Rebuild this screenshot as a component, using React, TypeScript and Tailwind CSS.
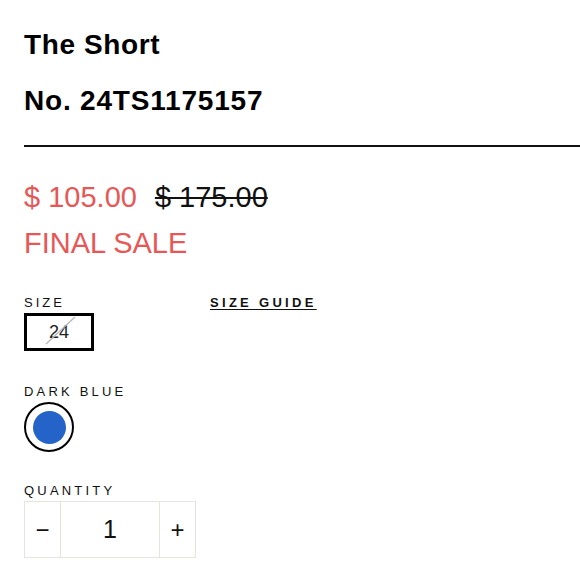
export default function App() {
  return (
    <div className="h-[580px] w-[580px] overflow-hidden bg-white pl-6 font-['Liberation_Sans',Arial,sans-serif] text-black">
      <h1 className="pt-[29px] text-[28px] font-bold leading-[32px] tracking-[0.6px]">The Short</h1>
      <h2 className="mt-[24px] text-[28px] font-bold leading-[32px] tracking-[0.8px]">No. 24TS1175157</h2>
      <div className="mt-[28px] h-[2px] bg-[#111]" />

      <div className="mt-[34px] flex items-baseline gap-[18px] text-[29px] leading-[32px]">
        <span className="text-[#e95656]">$ 105.00</span>
        <span className="text-[#111] line-through decoration-2">$ 175.00</span>
      </div>
      <div className="mt-[14px] text-[29px] leading-[32px] text-[#e95656]">FINAL SALE</div>

      <div className="mt-[37px] flex items-start">
        <div className="w-[186px]">
          <div className="text-[13px] leading-[14px] tracking-[3px] text-[#111]">SIZE</div>
          <div className="relative mt-[3px] flex h-[38px] w-[70px] items-center justify-center border-[3px] border-black text-[18px] text-[#222]">
            24
            <svg className="absolute inset-0 h-full w-full" viewBox="0 0 64 32" preserveAspectRatio="none">
              <line x1="19" y1="28" x2="48" y2="1" stroke="#b5b5b5" strokeWidth="1.2" />
            </svg>
          </div>
        </div>
        <a className="text-[13px] font-bold leading-[14px] tracking-[3.3px] underline underline-offset-2 text-[#111]">
          SIZE GUIDE
        </a>
      </div>

      <div className="mt-[34px] text-[13px] leading-[14px] tracking-[3.2px] text-[#111]">DARK BLUE</div>
      <div className="mt-[3px] flex h-[50px] w-[50px] items-center justify-center rounded-full border-2 border-black">
        <div className="h-[33px] w-[33px] rounded-full bg-[#2463c8]" />
      </div>

      <div className="mt-[32px] text-[13px] leading-[14px] tracking-[3.2px] text-[#111]">QUANTITY</div>
      <div className="mt-[3px] flex h-[57px] w-[172px] border border-[#e6e4df]">
        <button className="flex w-[36px] items-center justify-center border-r border-[#e6e4df] text-[24px] text-[#111]">
          −
        </button>
        <div className="flex flex-1 items-center justify-center text-[25px] text-[#111]">1</div>
        <button className="flex w-[36px] items-center justify-center border-l border-[#e6e4df] text-[24px] text-[#111]">
          +
        </button>
      </div>
    </div>
  );
}
